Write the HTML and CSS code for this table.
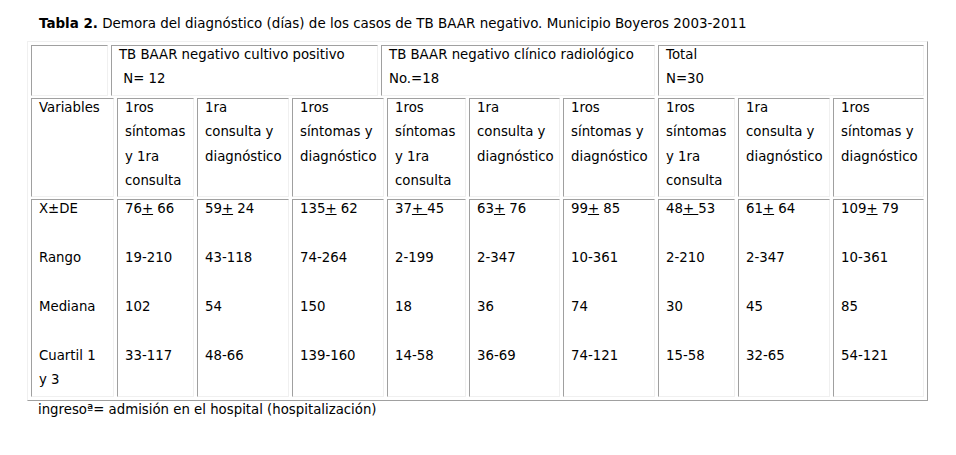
FILE: index.html
```html
<!DOCTYPE html>
<html lang="es">
<head>
<meta charset="utf-8">
<title>Tabla 2</title>
<link rel="stylesheet" href="styles.css">
</head>
<body>
<div class="page">
  <p class="title"><b>Tabla 2.</b> Demora del diagnóstico (días) de los casos de TB BAAR negativo. Municipio Boyeros 2003-2011</p>
  <table class="grid">
    <colgroup>
      <col class="w77"><col class="w3"><col class="w77"><col class="w92"><col class="w86"><col class="w3"><col class="w79"><col class="w91"><col class="w92"><col class="w77"><col class="w92"><col class="w91">
    </colgroup>
    <tr>
      <td class="lbl"><div class="c"></div></td>
      <td colspan="4"><div class="c">TB BAAR negativo cultivo positivo<br>&nbsp;N= 12</div></td>
      <td colspan="4"><div class="c">TB BAAR negativo clínico radiológico<br>No.=18</div></td>
      <td colspan="3"><div class="c">Total<br>N=30</div></td>
    </tr>
    <tr>
      <td colspan="2" class="lbl"><div class="c">Variables</div></td>
      <td><div class="c">1ros síntomas y 1ra consulta</div></td>
      <td><div class="c">1ra consulta y diagnóstico</div></td>
      <td colspan="2"><div class="c">1ros síntomas y diagnóstico</div></td>
      <td><div class="c">1ros síntomas y 1ra consulta</div></td>
      <td><div class="c">1ra consulta y diagnóstico</div></td>
      <td><div class="c">1ros síntomas y diagnóstico</div></td>
      <td><div class="c">1ros síntomas y 1ra consulta</div></td>
      <td><div class="c">1ra consulta y diagnóstico</div></td>
      <td><div class="c">1ros síntomas y diagnóstico</div></td>
    </tr>
    <tr>
      <td colspan="2" class="lbl"><div class="c">X±DE<br><br>Rango<br><br>Mediana<br><br>Cuartil 1 y 3</div></td>
      <td><div class="c">76<u>+</u> 66<br><br>19-210<br><br>102<br><br>33-117</div></td>
      <td><div class="c">59<u>+</u> 24<br><br>43-118<br><br>54<br><br>48-66</div></td>
      <td colspan="2"><div class="c">135<u>+</u> 62<br><br>74-264<br><br>150<br><br>139-160</div></td>
      <td><div class="c">37<u>+ </u>45<br><br>2-199<br><br>18<br><br>14-58</div></td>
      <td><div class="c">63<u>+</u> 76<br><br>2-347<br><br>36<br><br>36-69</div></td>
      <td><div class="c">99<u>+</u> 85<br><br>10-361<br><br>74<br><br>74-121</div></td>
      <td><div class="c">48<u>+ </u>53<br><br>2-210<br><br>30<br><br>15-58</div></td>
      <td><div class="c">61<u>+</u> 64<br><br>2-347<br><br>45<br><br>32-65</div></td>
      <td><div class="c">109<u>+</u> 79<br><br>10-361<br><br>85<br><br>54-121</div></td>
    </tr>
  </table>
  <p class="note">ingresoª= admisión en el hospital (hospitalización)</p>
</div>
</body>
</html>
```

FILE: styles.css
```css
html, body {
  margin: 0;
  padding: 0;
  background: #fff;
}

body {
  font-family: "DejaVu Sans", Verdana, sans-serif;
  font-size: 13.3px;
  color: #000;
}

.page {
  padding: 14px 0 0 27px;
}

.title {
  margin: 0 0 7px 12px;
  font-size: 13.45px;
  line-height: 20px;
}

.grid {
  table-layout: fixed;
  width: 901px;
  border-collapse: separate;
  border-spacing: 3px 2px;
  padding: 1px 0;
  border-style: solid;
  border-width: 1px;
  border-color: #f0f0f0 #a0a0a0 #a0a0a0 #f0f0f0;
}

.grid td {
  vertical-align: top;
  padding: 0 4px 0 7px;
  line-height: 24.4px;
  border-style: solid;
  border-width: 1px;
  border-color: #a0a0a0 #f0f0f0 #f0f0f0 #a0a0a0;
}

.grid td.lbl {
  padding-right: 10px;
}

.grid .c {
  margin: -3px 0 3px;
}

.grid .w3 { width: 3px; }
.grid .w77 { width: 77px; }
.grid .w79 { width: 79px; }
.grid .w86 { width: 86px; }
.grid .w91 { width: 91px; }
.grid .w92 { width: 92px; }

.note {
  margin: 0 0 0 11px;
  line-height: 18px;
}
```
